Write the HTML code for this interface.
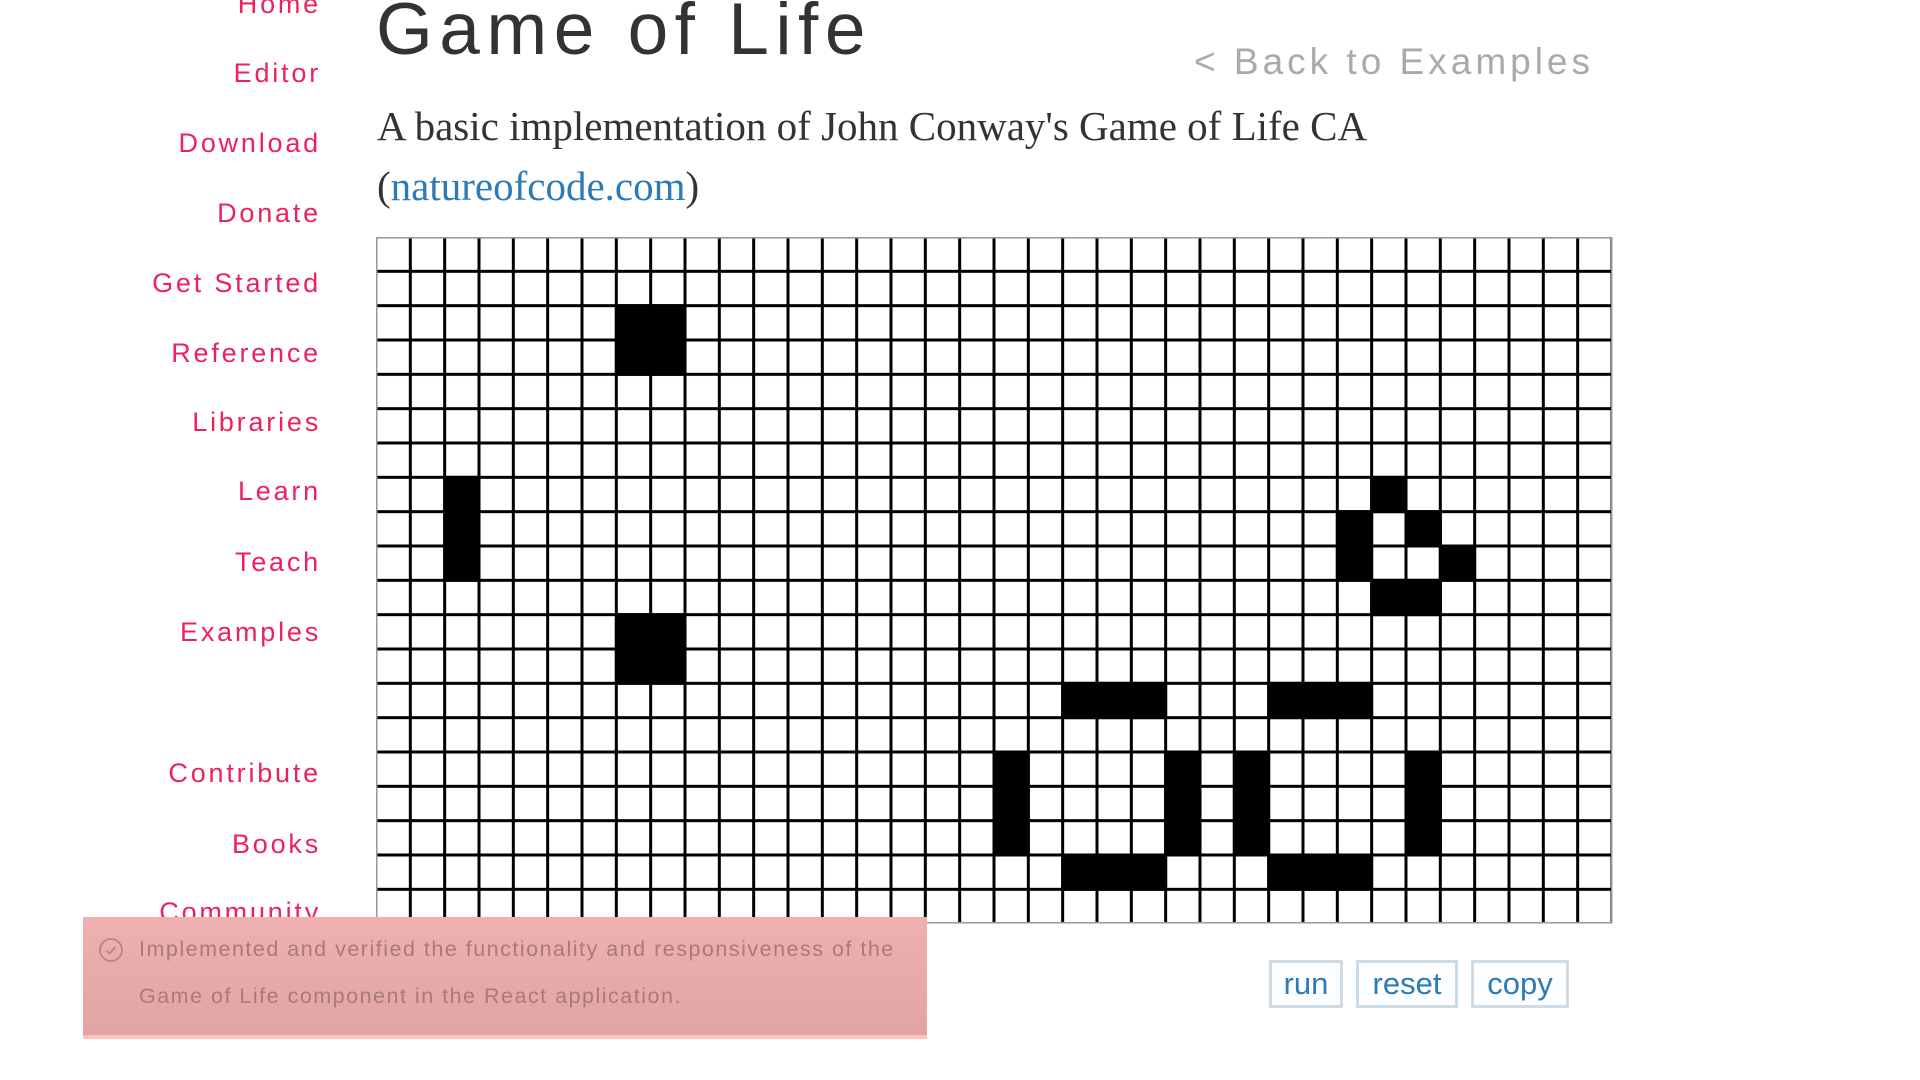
<!DOCTYPE html>
<html><head><meta charset="utf-8"><style>
body{margin:0;width:1920px;height:1080px;overflow:hidden;background:#fff;position:relative;font-family:"Liberation Sans",sans-serif}
.nav a{position:absolute;right:1599px;color:#ED225D;font-size:27px;letter-spacing:2.8px;text-decoration:none;white-space:nowrap;line-height:30px}
h1{position:absolute;left:376px;top:-12px;margin:0;font-weight:normal;font-size:73px;color:#333;letter-spacing:6.5px}
.back{position:absolute;left:1194px;top:41px;font-size:37px;letter-spacing:4px;color:#aaa;white-space:nowrap}
p{position:absolute;left:377px;top:96px;margin:0;width:1200px;font-family:"Liberation Serif",serif;font-size:41px;line-height:60px;color:#333}
p a{color:#2D7BB6;text-decoration:none}
svg.g{position:absolute;left:376px;top:237px}
.btn{position:absolute;top:960px;height:42px;border:3px solid #cddbe6;color:#2D7BB6;font-size:31px;line-height:42px;text-align:center;background:#fdfeff}
.toast{position:absolute;left:83px;top:917px;width:844px;height:118px;background:linear-gradient(#eeb1af,#e2a4a3);border-bottom:4px solid #f8c2c0}
.toast div{position:absolute;left:56px;font-size:21.5px;letter-spacing:1.5px;color:#a87a7a;white-space:nowrap}
</style></head><body>
<div class="nav">
<a style="top:-11px">Home</a>
<a style="top:58px">Editor</a>
<a style="top:128px">Download</a>
<a style="top:198px">Donate</a>
<a style="top:268px">Get Started</a>
<a style="top:338px">Reference</a>
<a style="top:407px">Libraries</a>
<a style="top:476px">Learn</a>
<a style="top:547px">Teach</a>
<a style="top:617px">Examples</a>
<a style="top:758px">Contribute</a>
<a style="top:829px">Books</a>
<a style="top:897px">Community</a>
</div>
<h1>Game of Life</h1>
<div class="back">&lt; Back to Examples</div>
<p>A basic implementation of John Conway's Game of Life CA<br>(<a>natureofcode.com</a>)</p>
<svg class="g" width="1237" height="687" viewBox="0 0 1237 687">
<defs><pattern id="p" x="-1.5" y="-1.5" width="34.333" height="34.333" patternUnits="userSpaceOnUse"><rect x="0" y="0" width="3" height="34.333" fill="#000"/><rect x="0" y="0" width="34.333" height="3" fill="#000"/></pattern></defs>
<rect width="1236" height="686" fill="#fff"/>
<rect width="1236" height="686" fill="url(#p)"/>
<g fill="#000" id="cells"></g>
<rect x="0.75" y="0.75" width="1235" height="685" fill="none" stroke="#999" stroke-width="1.5"/>
</svg>
<div class="btn" style="left:1269px;width:68px">run</div>
<div class="btn" style="left:1356px;width:96px">reset</div>
<div class="btn" style="left:1471px;width:92px">copy</div>
<div class="toast">
<svg style="position:absolute;left:15px;top:20px" width="26" height="26" viewBox="0 0 26 26"><circle cx="13" cy="13" r="11" fill="none" stroke="#b58585" stroke-width="1.8"/><path d="M8.5 13.5l3 3 6-6.5" fill="none" stroke="#b58585" stroke-width="1.8"/></svg>
<div style="top:20px">Implemented and verified the functionality and responsiveness of the</div>
<div style="top:67px">Game of Life component in the React application.</div>
</div>
<script>
var c=[[7,2],[8,2],[7,3],[8,3],[2,7],[2,8],[2,9],[7,11],[8,11],[7,12],[8,12],[29,7],[28,8],[30,8],[28,9],[31,9],[29,10],[30,10]];
[20,21,22,26,27,28].forEach(function(x){c.push([x,13]);c.push([x,18]);});
[18,23,25,30].forEach(function(x){[15,16,17].forEach(function(y){c.push([x,y]);});});
var g=document.getElementById('cells'),s='',p=34.333;
c.forEach(function(a){s+='<rect x="'+(a[0]*p-1.5)+'" y="'+(a[1]*p-1.5)+'" width="'+(p+3)+'" height="'+(p+3)+'"/>';});
g.innerHTML=s;
</script>
</body></html>
